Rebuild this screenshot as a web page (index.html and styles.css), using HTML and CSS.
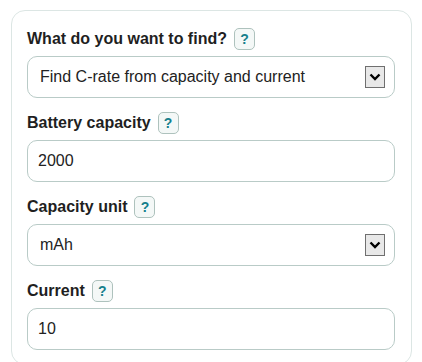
FILE: index.html
```html
<!doctype html>
<html lang="en">
<head>
    <meta charset="UTF-8">
    <title>C-rate calculator</title>
    <link rel="stylesheet" href="styles.css">
</head>
<body>
<div class="card">
    <div class="group">
        <div class="label-row">
            <label>What do you want to find?</label>
            <span class="help">?</span>
        </div>
        <div class="field select">
            <span class="value">Find C-rate from capacity and current</span>
            <span class="arrow">
                <svg width="12" height="8" viewBox="0 0 12 8"><path d="M1.5 1.5 L6 6 L10.5 1.5" fill="none" stroke="#000" stroke-width="2.4"/></svg>
            </span>
        </div>
    </div>
    <div class="group">
        <div class="label-row">
            <label>Battery capacity</label>
            <span class="help">?</span>
        </div>
        <div class="field input">2000</div>
    </div>
    <div class="group">
        <div class="label-row">
            <label>Capacity unit</label>
            <span class="help">?</span>
        </div>
        <div class="field select">
            <span class="value">mAh</span>
            <span class="arrow">
                <svg width="12" height="8" viewBox="0 0 12 8"><path d="M1.5 1.5 L6 6 L10.5 1.5" fill="none" stroke="#000" stroke-width="2.4"/></svg>
            </span>
        </div>
    </div>
    <div class="group">
        <div class="label-row">
            <label>Current</label>
            <span class="help">?</span>
        </div>
        <div class="field input">10</div>
    </div>
</div>
</body>
</html>
```

FILE: styles.css
```css
* {
    padding: 0;
    margin: 0;
    box-sizing: border-box;
}

body {
    font-family: "Liberation Sans", Arial, sans-serif;
    color: #222;
    background: #fff;
}

.card {
    width: 401px;
    margin: 10px 0 0 11px;
    padding: 17px 16px 0 15px;
    border: 1px solid #dce6e4;
    border-radius: 14px;
}

.group {
    margin-bottom: 14px;
}

.label-row {
    display: flex;
    align-items: center;
    gap: 7px;
    height: 22px;
    margin-bottom: 6px;
}

label {
    font-size: 16px;
    font-weight: bold;
    color: #1f1f1f;
}

.help {
    display: flex;
    align-items: center;
    justify-content: center;
    width: 21px;
    height: 22px;
    border: 1px solid #aec2bd;
    border-radius: 5px;
    background: #f4f8f7;
    color: #16808c;
    font-size: 14px;
    font-weight: bold;
}

.field {
    display: flex;
    align-items: center;
    height: 42px;
    border: 1px solid #b9cbc7;
    border-radius: 10px;
    font-size: 16px;
    color: #222;
}

.input {
    padding-left: 10px;
}

.select {
    justify-content: space-between;
    padding: 0 9px 0 12px;
}

.arrow {
    display: flex;
    align-items: center;
    justify-content: center;
    width: 20px;
    height: 22px;
    border: 1px solid #6f6f6f;
    background: #e8e8e8;
}
```
